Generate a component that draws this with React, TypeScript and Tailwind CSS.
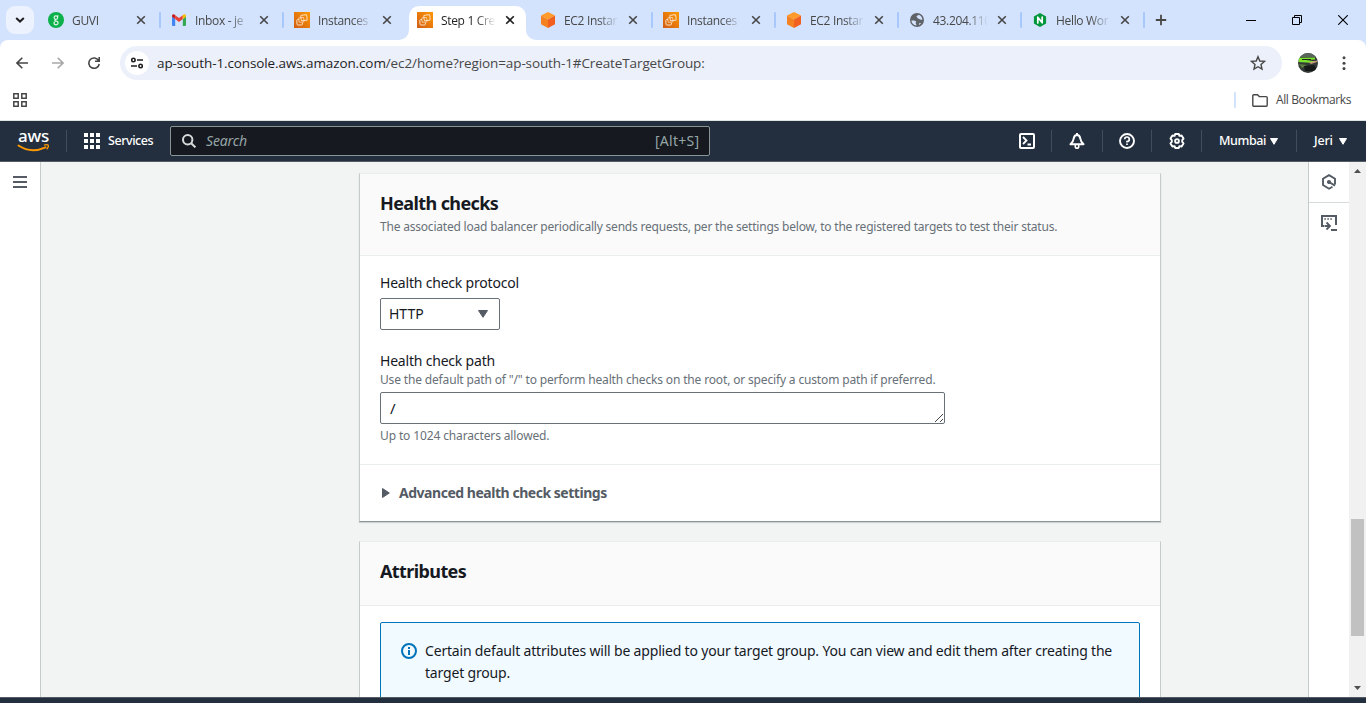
import React from "react";

const Ec2Icon = () => (
  <svg width="16" height="16" viewBox="0 0 16 16" fill="none">
    <defs>
      <linearGradient id="ec2" x1="0" y1="1" x2="1" y2="0">
        <stop offset="0" stopColor="#d05c17" />
        <stop offset="1" stopColor="#f90" />
      </linearGradient>
    </defs>
    <path fill="url(#ec2)" d="M0 0h16v16H0z" />
    <g stroke="#fbe0c2" strokeWidth="1" strokeLinejoin="round">
      <rect x="7" y="3" width="6" height="5.500" rx="1" transform="rotate(-6 10 6)" />
      <rect x="4.900" y="5.600" width="5" height="4.600" rx="1" transform="rotate(-6 7 8)" opacity=".75" />
      <path d="M5 7.600H3.600a.8.800 0 0 0-.8.800L3 12.200a.8.800 0 0 0 .8.800h3.800a.8.800 0 0 0 .8-.8V10.600" />
    </g>
  </svg>
);

const CubeIcon = () => (
  <svg width="16" height="16" viewBox="0 0 16 16">
    <path fill="#ff9a2b" d="M8 0l7 3.600L8 7.400 1 3.600z" />
    <path fill="#f58220" d="M1 3.600l7 3.800V16l-7-3.800z" />
    <path fill="#f1601f" d="M15 3.600L8 7.400V16l7-3.800z" />
  </svg>
);

const GuviIcon = () => (
  <svg width="16" height="16" viewBox="0 0 16 16" fill="none">
    <circle cx="8" cy="8" r="8" fill="#0db14b" />
    <circle cx="7.900" cy="5.600" r="1.800" stroke="#e3f7ea" strokeWidth="1.200" />
    <path d="M8 7.500c-1.600.2-1.600 1.300 0 1.500 3 .4 2.600 3.800 0 3.800-2.500 0-2.700-2.700-.6-3.300M9.300 4.500l1-1" stroke="#e3f7ea" strokeWidth="1.200" />
  </svg>
);

const GmailIcon = () => (
  <svg width="16" height="16" viewBox="0 0 16 16">
    <path fill="#4285f4" d="M1 4.500l3.200 2.400V14H2a1 1 0 0 1-1-1z" />
    <path fill="#34a853" d="M11.800 6.900L15 4.500V13a1 1 0 0 1-1 1h-2.200z" />
    <path fill="#ea4335" d="M4.200 3.200L8 6.100l3.800-2.900v3.900L8 10 4.200 7.100z" />
    <path fill="#c5221f" d="M1 3.900c0-1.700 1.700-2.200 3.200-.8v4L1 4.700z" />
    <path fill="#fbbc04" d="M15 3.900c0-1.700-1.700-2.200-3.200-.8v4L15 4.700z" />
  </svg>
);

const GlobeIcon = () => (
  <svg width="16" height="16" viewBox="0 0 16 16">
    <circle cx="8" cy="8" r="7" fill="#5f6368" />
    <path fill="#d3e3fd" d="M2.400 8.500c1.800-.1 3.700-.2 4.500.8.700 1-.4 1.300-.2 2.200.2.700.9.800.8 1.900-2.800-.2-4.900-2.200-5.100-4.900zM9.800 2.700c-.3.900-2.200.7-2.300 1.700 0 .9 1 .8 1.200 1.600.2.900 1.400.8 2.100 1.300.8.600 1.700.4 2.600.1C13.200 5.200 11.800 3.400 9.800 2.700zM10 11.900c.4-1.200 1.300-.9 2.200-1.200-.5 1-1.200 1.800-2.100 2.300-.2-.4-.2-.7-.1-1.100z" />
  </svg>
);

const NginxIcon = () => (
  <svg width="16" height="16" viewBox="0 0 16 16" fill="none">
    <path fill="#009639" d="M8 1l6.100 3.500v7L8 15l-6.100-3.500v-7z" />
    <path d="M5.800 11V5.200l4.400 5.600V5" stroke="#fff" strokeWidth="1.700" strokeLinejoin="round" strokeLinecap="round" />
  </svg>
);

const tabs = [
  { title: "GUVI", icon: <GuviIcon /> },
  { title: "Inbox - je", icon: <GmailIcon /> },
  { title: "Instances", icon: <Ec2Icon /> },
  { title: "Step 1 Cre", icon: <Ec2Icon />, active: true },
  { title: "EC2 Instar", icon: <CubeIcon /> },
  { title: "Instances", icon: <Ec2Icon /> },
  { title: "EC2 Instar", icon: <CubeIcon /> },
  { title: "43.204.110", icon: <GlobeIcon /> },
  { title: "Hello Wor", icon: <NginxIcon /> },
];

function Tab({ title, icon, active, divider }: { title: string; icon: React.ReactNode; active?: boolean; divider: boolean }) {
  return (
    <>
      <div
        className={
          active
            ? "relative flex h-[34px] w-[117px] shrink-0 items-center rounded-t-[10px] bg-white pb-[6px] pl-2 text-[#1f1f1f]"
            : "flex h-[34px] w-[117px] shrink-0 items-center pb-[6px] pl-2 text-[#474747]"
        }
      >
        {active && (
          <>
            <svg className="absolute bottom-0 -left-[10px]" width="10" height="10"><path fill="#fff" d="M10 0v10H0A10 10 0 0 0 10 0z" /></svg>
            <svg className="absolute -right-[10px] bottom-0" width="10" height="10"><path fill="#fff" d="M0 0v10h10A10 10 0 0 1 0 0z" /></svg>
          </>
        )}
        {icon}
        <span className="mt-[2px] ml-2 w-[55px] text-[12px] leading-4 tracking-[-0.33px] whitespace-nowrap [mask-image:linear-gradient(to_right,#000_62%,transparent_100%)]">
          {title}
        </span>
        <svg className="ml-[9px]" width="10" height="10" viewBox="0 0 10 10" fill="none" stroke="currentColor" strokeWidth="1.600">
          <path d="M1.200 1.200l7.600 7.600M8.800 1.200L1.200 8.800" />
        </svg>
      </div>
      <div className="flex h-[34px] w-[6px] shrink-0 justify-center pt-[6px]">
        {divider && <div className="h-4 w-[2px] rounded bg-[#a8c7fa]" />}
      </div>
    </>
  );
}

function BrowserChrome() {
  return (
    <div className="h-[121px] shrink-0 bg-[#d3e3fd] font-['Open_Sans',sans-serif]">
      <div className="flex h-10 pt-[6px]">
        <div className="ml-[6px] flex h-7 w-7 items-center justify-center rounded-[9px] bg-[#ecf2fe]">
          <svg width="10" height="6" viewBox="0 0 10 6" fill="none" stroke="#1f1f1f" strokeWidth="2"><path d="M1.200 1l3.800 3.600L8.800 1" /></svg>
        </div>
        <div className="ml-[6px] flex">
          {tabs.map((t, i) => (
            <Tab key={i} {...t} divider={i !== 2 && i !== 3} />
          ))}
        </div>
        <svg className="mt-2 ml-[8px]" width="12" height="12" fill="none" stroke="#474747" strokeWidth="1.800"><path d="M6 .800v10.400M.800 6h10.400" /></svg>
        <div className="mt-[9px] mr-[18px] ml-auto flex gap-[36px]">
          <svg width="10" height="10"><path stroke="#000" d="M0 5.500h10" /></svg>
          <svg width="10" height="10" fill="none" stroke="#000"><path d="M.5 2.500h7v7h-7zM2.500 2.500v-2h7v7h-2" /></svg>
          <svg width="10" height="10" fill="none" stroke="#000" strokeWidth="1.100"><path d="M.2.2l9.600 9.600M9.800.2L.2 9.800" /></svg>
        </div>
      </div>
      <div className="h-[81px] rounded-t-[8px] border-b border-[#dfe5e3] bg-white pt-[6px]">
        <div className="flex h-[34px] items-center">
          <svg className="ml-4" width="12" height="12" fill="none" stroke="#474747" strokeWidth="1.600"><path d="M12 6H1.200M6.300.7L1 6l5.300 5.300" /></svg>
          <svg className="ml-6" width="12" height="12" fill="none" stroke="#a9a9a9" strokeWidth="1.600"><path d="M0 6h10.800M5.700.7L11 6l-5.300 5.300" /></svg>
          <svg className="ml-6" width="12" height="12" fill="none" stroke="#474747" strokeWidth="1.600"><path d="M10.600 3.600A5.200 5.200 0 1 0 11.200 7M11.200 0v4.200H7" /></svg>
          <div className="ml-5 flex h-[34px] w-[1162px] items-center rounded-full bg-[#ecf0fa] pl-[5px]">
            <div className="flex h-6 w-6 items-center justify-center rounded-full bg-white">
              <svg width="12" height="12" fill="none" stroke="#1f1f1f" strokeWidth="1.600"><circle cx="2.400" cy="3" r="1.700" /><path d="M6 3h6M0 9h6" /><circle cx="9.600" cy="9" r="1.700" /></svg>
            </div>
            <span className="mb-px ml-2 text-[13.500px] leading-5 tracking-[-0.11px] whitespace-nowrap text-[#474747]">
              <span className="text-[#1f1f1f]">ap-south-1.console.aws.amazon.com</span>/ec2/home?region=ap-south-1#CreateTargetGroup:
            </span>
            <svg className="mr-4 ml-auto" width="16" height="16" fill="none" stroke="#474747" strokeWidth="1.400"><path d="M8 1.700l1.800 4.300 4.700.4-3.500 3.100 1 4.600L8 11.700l-4 2.400 1-4.600L1.500 6.400l4.700-.4z" /></svg>
          </div>
          <svg className="ml-4" width="20" height="20">
            <clipPath id="av"><circle cx="10" cy="10" r="10" /></clipPath>
            <g clipPath="url(#av)">
              <path fill="#343b36" d="M0 0h20v20H0z" />
              <path fill="#59645b" d="M0 0h20v4H0z" />
              <path fill="#7be32c" d="M1 4.800l16-.2v1.800L8 6.900l10 1.600-6 1.300L0 9z" />
              <path fill="#1d2620" d="M4 5.900h9v1H4z" />
              <path fill="#c99b79" d="M11 9.500l8-2v1.400l-6 2z" />
              <path fill="#5c7c42" d="M1 11l8 1-5 3z" />
              <path fill="#151a18" d="M6 13l10-1 4 6H7z" />
            </g>
          </svg>
          <svg className="ml-6" width="4" height="14" fill="#474747"><circle cx="2" cy="1.800" r="1.500" /><circle cx="2" cy="7.200" r="1.500" /><circle cx="2" cy="12.600" r="1.500" /></svg>
        </div>
        <div className="flex h-10 items-center">
          <svg className="ml-[13px]" width="14" height="14" fill="none" stroke="#474747" strokeWidth="1.500"><path d="M.8.8h4.400v4.400H.8zM8.800.8h4.400v4.400H8.800zM.8 8.800h4.400v4.400H.8zM8.800 8.800h4.400v4.400H8.800z" /></svg>
          <div className="ml-auto h-4 w-[2px] bg-[#d3e3fd]" />
          <svg className="ml-4" width="16" height="13" fill="none" stroke="#474747" strokeWidth="1.400"><path d="M.8 1.800a1 1 0 0 1 1-1h3.700L7.300 2.600h6.900a1 1 0 0 1 1 1v7.600a1 1 0 0 1-1 1H1.800a1 1 0 0 1-1-1z" /></svg>
          <span className="mr-[14px] ml-2 w-[76px] text-[12px] leading-4 tracking-[-0.38px] whitespace-nowrap text-[#474747]">All Bookmarks</span>
        </div>
      </div>
    </div>
  );
}

const Sep = ({ className = "" }: { className?: string }) => <div className={"h-[22px] w-px shrink-0 bg-[#414d5c] " + className} />;
const Caret = () => <svg width="8" height="7" fill="#fff" stroke="#fff" strokeLinejoin="round"><path d="M.5.500h7L4 6.300z" /></svg>;

function AwsHeader() {
  return (
    <div className="flex h-[41px] shrink-0 items-center border-b border-[#545b64] bg-[#232f3e] text-[12.500px] text-white">
      <div className="ml-[17px] flex w-[33px] shrink-0 flex-col items-center">
        <span className="h-[13px] text-[17px] leading-[9px] font-medium tracking-[-0.2px]">aws</span>
        <svg width="33" height="8">
          <path d="M1.500 1.500c8.500 5.700 18.500 5.700 27 1.800" fill="none" stroke="#f90" strokeWidth="1.900" strokeLinecap="round" />
          <path d="M27 1.200c1.800-.5 3.800-.5 4.200 0 .3.600-.3 2.700-1.500 4" fill="none" stroke="#f90" strokeWidth="1.300" />
        </svg>
      </div>
      <Sep className="ml-4" />
      <svg className="ml-[17px]" width="16" height="16" fill="#fff"><path d="M0 0h4v4H0zM6 0h4v4H6zM12 0h4v4h-4zM0 6h4v4H0zM6 6h4v4H6zM12 6h4v4h-4zM0 12h4v4H0zM6 12h4v4H6zM12 12h4v4h-4z" /></svg>
      <span className="ml-2 w-[62px] font-medium tracking-[-0.45px]">Services</span>
      <div className="flex h-[30px] w-[540px] items-center rounded-[2px] border border-[#879596] bg-[#16191f] pr-[9px] pl-[11px] text-[14px] text-[#95a5a6]">
        <svg width="14" height="14" fill="none" stroke="#d5dbdb" strokeWidth="2"><circle cx="5.700" cy="5.700" r="4.700" /><path d="M9.200 9.200l4.200 4.200" /></svg>
        <span className="mb-px ml-[10px] tracking-[-0.15px] italic">Search</span>
        <span className="mb-px ml-auto w-[45px] text-[14px] tracking-[0.25px]">[Alt+S]</span>
      </div>
      <svg className="ml-[309px]" width="16" height="16" fill="none" stroke="#fff" strokeWidth="2"><rect x="1" y="1" width="14" height="14" rx="1" /><path strokeWidth="1.800" d="M4 4L7.500 7.500 4 11M8.500 11.500H12" /></svg>
      <Sep className="ml-4" />
      <svg className="ml-[17px]" width="16" height="16" fill="none" stroke="#fff" strokeWidth="2" strokeLinejoin="round"><path d="M8 0v2M8 2C6 2 5 3.600 4.700 5.500 4.500 8 3.500 9.200 1.500 11.200h13c-2-2-3-3.200-3.200-5.700C11 3.600 10 2 8 2z" /><path strokeWidth="1.600" d="M6.300 12v2.200l.8.900h1.800l.8-.9V12" /></svg>
      <Sep className="ml-[17px]" />
      <svg className="ml-4" width="16" height="16" fill="none" stroke="#fff" strokeWidth="1.900"><circle cx="8" cy="8" r="7" /><path strokeWidth="1.700" d="M5.700 6.300A2.300 2.300 0 1 1 8 8.600v1M8 10.500v1.600" /></svg>
      <Sep className="ml-4" />
      <svg className="ml-[17px]" width="16" height="16" viewBox="1 1 16 16" fill="none" stroke="#fff" strokeWidth="1.900"><circle cx="9" cy="9" r="1.900" /><path strokeLinejoin="round" d="M7.200 2h3.600l.6 1.900 2.200-.4 1.900 3.100L14.200 8.200v1.600l1.300 1.600-1.900 3.100-2.200-.4-.6 1.900H7.200l-.6-1.900-2.200.4-1.900-3.100 1.300-1.600V8.200L2.500 6.600l1.900-3.100 2.200.4z" /></svg>
      <Sep className="ml-4" />
      <span className="ml-[17px] w-[45px] font-medium tracking-[-0.4px]">Mumbai</span>
      <div className="ml-[6px]"><Caret /></div>
      <Sep className="ml-[18px]" />
      <span className="ml-[17px] w-[20px] font-medium tracking-[-0.2px]">Jeri</span>
      <div className="ml-[5px]"><Caret /></div>
    </div>
  );
}

function HealthChecks() {
  return (
    <section className="h-[349px] border border-t-[#eaeded] border-r-[#c6cccc] border-b-[#879596] border-l-[#c6cccc] bg-white shadow-[0_1px_1px_rgba(0,28,36,0.15)]">
      <header className="h-[82px] border-b border-[#eaeded] bg-[#fafafa] pt-[18px] pl-5">
        <h2 className="text-[18px] leading-[22px] font-bold tracking-[-0.6px]">Health checks</h2>
        <p className="mt-[5px] text-[12px] leading-4 tracking-[-0.203px] text-[#687078]">The associated load balancer periodically sends requests, per the settings below, to the registered targets to test their status.</p>
      </header>
      <div className="h-[209px] border-b border-[#eaeded] pt-4 pl-5">
        <label className="block text-[14px] leading-[22px] tracking-[-0.2px]">Health check protocol</label>
        <div className="mt-1 flex h-8 w-[120px] items-center justify-between rounded-[2px] border border-[#687078] pr-[11px] pl-2 text-[14px]">
          <span className="mb-[2px]">HTTP</span>
          <svg width="10" height="8" fill="#545b64" stroke="#545b64" strokeLinejoin="round"><path d="M.5.500h9L5 7.300z" /></svg>
        </div>
        <label className="mt-5 block text-[14px] leading-[22px] tracking-[-0.2px]">Health check path</label>
        <p className="text-[12px] leading-4 tracking-[-0.158px] text-[#687078]">Use the default path of "/" to perform health checks on the root, or specify a custom path if preferred.</p>
        <div className="mt-1 flex h-8 w-[565px] items-center justify-between rounded-[2px] border border-[#687078] pl-[9px] text-[15px]">
          /
          <svg className="self-end" width="10" height="10" stroke="#444"><path d="M1 9L9 1M6 9l3-3" /></svg>
        </div>
        <p className="mt-1 text-[12px] leading-4 tracking-[-0.13px] text-[#687078]">Up to 1024 characters allowed.</p>
      </div>
      <div className="flex h-[56px] items-center pl-[22px] text-[14px] font-bold tracking-[-0.47px] text-[#545b64]">
        <svg width="8" height="10" fill="#545b64" stroke="#545b64" strokeLinejoin="round"><path d="M.5.500L7.300 5 .5 9.500z" /></svg>
        <span className="mb-[2px] ml-[9px]">Advanced health check settings</span>
      </div>
    </section>
  );
}

function Attributes() {
  return (
    <section className="mt-[19px] h-[220px] border border-t-[#eaeded] border-r-[#c6cccc] border-b-[#879596] border-l-[#c6cccc] bg-white">
      <header className="h-16 border-b border-[#eaeded] bg-[#fafafa] pt-[18px] pl-5">
        <h2 className="text-[18px] leading-[22px] font-bold tracking-[-0.6px]">Attributes</h2>
      </header>
      <div className="mx-5 mt-4 flex h-[120px] rounded-[2px] border border-[#0073bb] bg-[#f1faff] pt-[17px] pl-5">
        <svg className="mt-[3px] shrink-0" width="16" height="16" fill="none" stroke="#0073bb" strokeWidth="2"><circle cx="8" cy="8" r="7" /><path d="M8 4v2M8 7v5" /></svg>
        <p className="ml-2 w-[700px] text-[14px] leading-[22px] tracking-[-0.183px]">
          Certain default attributes will be applied to your target group. You can view and edit them after creating the
          <br />
          target group.
        </p>
      </div>
    </section>
  );
}

export default function App() {
  return (
    <div className="flex h-[703px] w-[1366px] flex-col overflow-hidden bg-white font-['Noto_Sans',sans-serif] text-[#16191f]">
      <BrowserChrome />
      <AwsHeader />
      <div className="flex h-[535px] shrink-0 overflow-hidden">
        <aside className="w-[41px] shrink-0 border-r border-[#c6cccc] bg-white pt-[14px] pl-[13px]">
          <svg width="14" height="12" stroke="#545b64" strokeWidth="2"><path d="M0 1h14M0 6h14M0 11h14" /></svg>
        </aside>
        <main className="h-[535px] w-[1267px] shrink-0 overflow-hidden bg-[#f2f3f3] pt-[11px] pl-[318px]">
          <div className="w-[802px]">
            <HealthChecks />
            <Attributes />
          </div>
        </main>
        <aside className="w-[41px] shrink-0 border-l border-[#c6cccc] bg-white">
          <div className="flex h-[41px] items-center justify-center border-b border-[#d5dbdb]">
            <svg width="16" height="16" fill="none" stroke="#545b64" strokeWidth="1.900"><path d="M14 10.500V4.800L8 1.200 2 4.800V11l6 3.700 3.500-2" /><path d="M8 8l6 3.600" /><circle cx="8" cy="8" r="1.100" fill="#545b64" /></svg>
          </div>
          <div className="flex h-[40px] items-center justify-center">
            <svg width="16" height="16" fill="none" stroke="#545b64" strokeWidth="2"><path d="M3 11H1V1h14v9" /><path strokeWidth="1.500" d="M3.300 4h1.600M6.300 4h1.600M9.300 4h1.600" /><path strokeWidth="1.800" d="M3.500 11H9M5.500 7.500L9 11l-3.500 3.500M10 15h6" /></svg>
          </div>
        </aside>
        <div className="flex w-[17px] shrink-0 flex-col items-center bg-[#f1f1f1]">
          <svg className="mt-[7px]" width="7" height="4" fill="#505050"><path d="M3.500 0L7 4H0z" /></svg>
          <div className="mt-[346px] h-[117px] w-[13px] bg-[#c1c1c1]" />
          <svg className="mt-[50px]" width="7" height="4" fill="#505050"><path d="M0 0h7L3.500 4z" /></svg>
        </div>
      </div>
      <div className="h-[6px] shrink-0 border-t border-[#545b64] bg-[#232f3e]" />
    </div>
  );
}
